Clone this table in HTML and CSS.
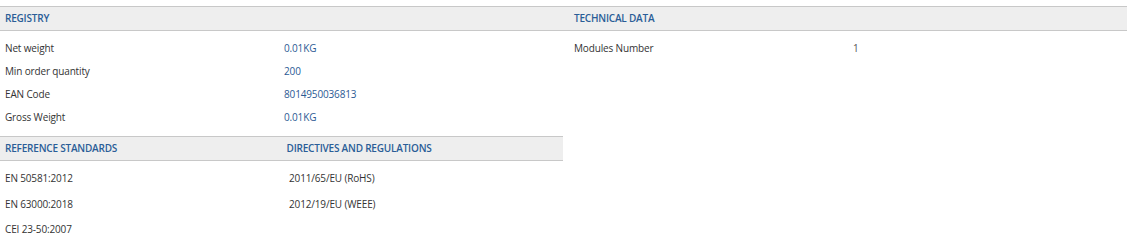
FILE: index.html
```html
<!DOCTYPE html>
<html lang="en">
<head>
<meta charset="utf-8">
<link rel="stylesheet" href="styles.css">
</head>
<body>
<div class="page">
  <div class="col col-left">
    <section class="section">
      <div class="head"><span class="head-cell">REGISTRY</span></div>
      <div class="rows">
        <div class="row"><span class="label">Net weight</span><span class="value">0.01KG</span></div>
        <div class="row"><span class="label">Min order quantity</span><span class="value">200</span></div>
        <div class="row"><span class="label">EAN Code</span><span class="value">8014950036813</span></div>
        <div class="row"><span class="label">Gross Weight</span><span class="value">0.01KG</span></div>
      </div>
    </section>
    <section class="section section-std">
      <div class="head head-split">
        <span class="head-cell">REFERENCE STANDARDS</span>
        <span class="head-cell">DIRECTIVES AND REGULATIONS</span>
      </div>
      <div class="std-grid">
        <div class="std-list">
          <span class="std">EN 50581:2012</span>
          <span class="std">EN 63000:2018</span>
          <span class="std">CEI 23-50:2007</span>
        </div>
        <div class="std-list">
          <span class="std">2011/65/EU (RoHS)</span>
          <span class="std">2012/19/EU (WEEE)</span>
        </div>
      </div>
    </section>
  </div>
  <div class="col col-right">
    <section class="section">
      <div class="head head-right"><span class="head-cell">TECHNICAL DATA</span></div>
      <div class="rows rows-right">
        <div class="row"><span class="label">Modules Number</span><span class="value-plain">1</span></div>
      </div>
    </section>
  </div>
</div>
</body>
</html>
```
FILE: styles.css
```css
* { box-sizing: border-box; }
html, body { margin: 0; padding: 0; background: #fff; }
body {
  font-family: "Open Sans", "DejaVu Sans", sans-serif;
  font-size: 10px;
  letter-spacing: -0.15px;
  color: #333;
}
.page {
  display: grid;
  grid-template-columns: 563px 1fr;
  padding-top: 6px;
}
.head {
  height: 25px;
  background: #eeeeee;
  border-top: 1px solid #c8c8c8;
  border-bottom: 1px solid #c8c8c8;
  display: flex;
  align-items: center;
  padding-bottom: 1px;
}
.head-cell {
  font-weight: 600;
  color: #2a5d97;
  padding-left: 5px;
  letter-spacing: -0.2px;
}
.head-split .head-cell { width: 284px; }
.head-right .head-cell { padding-left: 11px; }
.rows {
  padding: 5px 0 8px;
}
.rows-right { padding-left: 6px; }
.row {
  display: grid;
  grid-template-columns: 279px 1fr;
  height: 23px;
  align-items: center;
}
.label { padding-left: 5px; }
.value { padding-left: 5px; color: #2c5a94; }
.value-plain { padding-left: 5px; color: #555; }
.std-grid {
  display: grid;
  grid-template-columns: 284px 1fr;
  padding-top: 5px;
}
.std-list { display: flex; flex-direction: column; }
.std {
  height: 25.5px;
  line-height: 25px;
  padding-left: 5px;
}
```
